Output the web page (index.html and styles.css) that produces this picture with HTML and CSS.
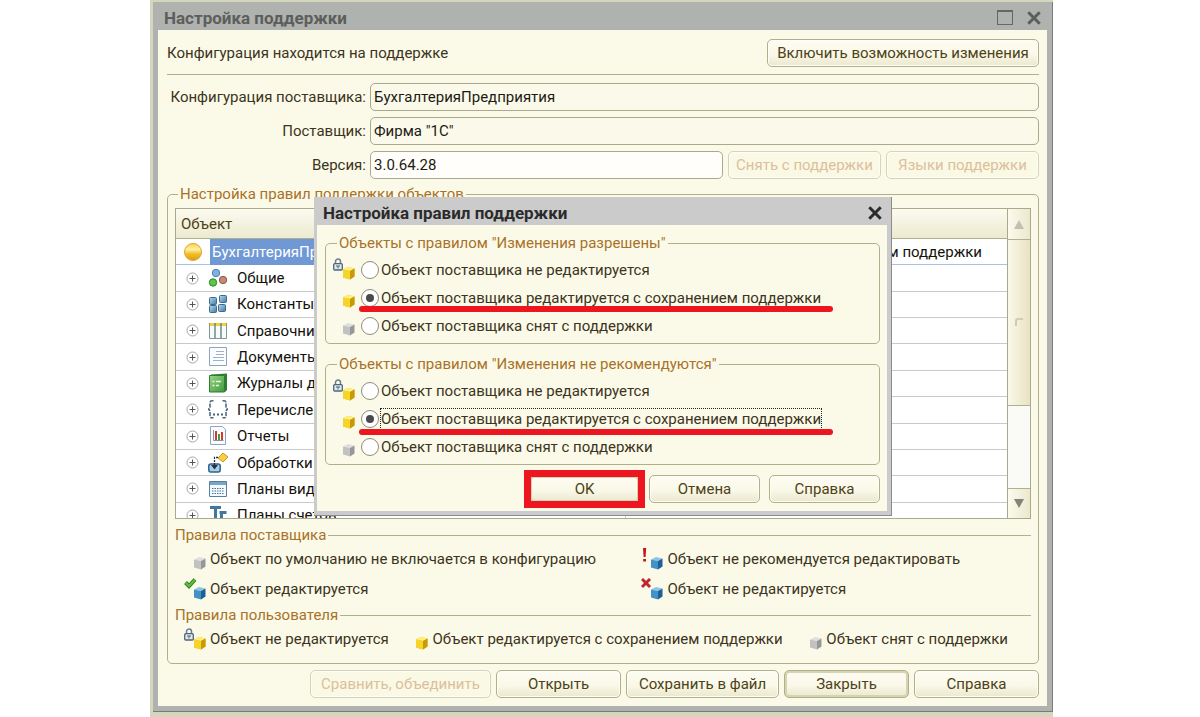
FILE: index.html
```html
<!DOCTYPE html>
<html lang="ru">
<head>
    <meta charset="UTF-8">
    <title>Настройка поддержки</title>
    <link rel="stylesheet" href="styles.css">
</head>
<body>

<svg class="sprite" aria-hidden="true">
    <defs>
        <linearGradient id="ball-fill" x1="0" y1="0" x2="0" y2="1">
            <stop offset="0" stop-color="#ffd23c"/>
            <stop offset=".35" stop-color="#fff0a8"/>
            <stop offset=".6" stop-color="#f5c02a"/>
            <stop offset="1" stop-color="#d99a12"/>
        </linearGradient>
        <linearGradient id="blue-fill" x1="0" y1="0" x2="1" y2="1">
            <stop offset="0" stop-color="#b9d8ec"/>
            <stop offset="1" stop-color="#3f7ba6"/>
        </linearGradient>
        <linearGradient id="green-fill" x1="0" y1="0" x2="1" y2="1">
            <stop offset="0" stop-color="#9ad58a"/>
            <stop offset="1" stop-color="#3f9a3a"/>
        </linearGradient>
    </defs>

    <!-- cubes sit in the lower right corner of a 22x22 box -->
    <symbol id="cube-yellow" viewBox="0 0 22 22">
        <path d="M10 11.500l5-2.500 6.500 1.500v8l-4.500 3-7-2z" fill="#e3b80e"/>
        <path d="M10 11.500l5-2.500 6.500 1.500-4.500 2.500z" fill="#fff07a"/>
        <path d="M10 11.500l7 1.500v8.500l-7-2z" fill="#f6d42a"/>
        <path d="M17 13l4.500-2.500v8l-4.500 3z" fill="#c99a08"/>
    </symbol>
    <symbol id="cube-gray" viewBox="0 0 22 22">
        <path d="M10 11.500l5-2.500 6.500 1.500-4.500 2.500z" fill="#dedede"/>
        <path d="M10 11.500l7 1.500v8.500l-7-2z" fill="#c2c2c2"/>
        <path d="M17 13l4.500-2.500v8l-4.500 3z" fill="#979797"/>
    </symbol>
    <symbol id="cube-blue" viewBox="0 0 22 22">
        <path d="M10 11.500l5-2.500 6.500 1.500-4.500 2.500z" fill="#8cc4e6"/>
        <path d="M10 11.500l7 1.500v8.500l-7-2z" fill="#4292c8"/>
        <path d="M17 13l4.500-2.500v8l-4.500 3z" fill="#1f5f94"/>
    </symbol>
    <symbol id="lock" viewBox="0 0 22 22">
        <path d="M2.500 6V3.500a2.500 2.500 0 0 1 5 0V6" fill="none" stroke="#6b8090" stroke-width="1.500"/>
        <rect x=".7" y="5.700" width="8.600" height="6.300" rx="1" fill="#dfe9ee" stroke="#4f6678" stroke-width="1.300"/>
        <path d="M3 8h4M5 8v2.500" stroke="#4f6678"/>
    </symbol>
    <symbol id="check" viewBox="0 0 22 22">
        <path d="M1.500 4.500l3.500 3.500 6-6.500" fill="none" stroke="#2f7d1d" stroke-width="4"/>
        <path d="M1.500 4.500l3.500 3.500 6-6.500" fill="none" stroke="#5fbf3c" stroke-width="2"/>
    </symbol>
    <symbol id="bang" viewBox="0 0 22 22">
        <path d="M2 0h3.200l-.6 9h-2zM2.200 11h2.800v2.600h-2.800z" fill="#c4161c"/>
    </symbol>
    <symbol id="cross" viewBox="0 0 22 22">
        <path d="M1 1l8 8M9 1l-8 8" stroke="#c0272d" stroke-width="3"/>
    </symbol>

    <symbol id="expand" viewBox="0 0 13 13">
        <circle cx="6.500" cy="6.500" r="5.500" fill="#fff" stroke="#a5a5a5"/>
        <path d="M3.500 6.500h6M6.500 3.500v6" stroke="#555"/>
    </symbol>
    <symbol id="ball" viewBox="0 0 20 20">
        <circle cx="10" cy="10" r="8.500" fill="url(#ball-fill)" stroke="#d9a63a"/>
    </symbol>
    <symbol id="common" viewBox="0 0 20 20">
        <circle cx="8" cy="5" r="3.700" fill="#7fb2e0" stroke="#4b82b4"/>
        <circle cx="5" cy="14.500" r="3.700" fill="#5cc646" stroke="#2f8a28"/>
        <circle cx="15" cy="12" r="3.700" fill="#c48a78" stroke="#8f5748"/>
    </symbol>
    <symbol id="constants" viewBox="0 0 20 20">
        <g fill="url(#blue-fill)" stroke="#3c6c90">
            <rect x="1.500" y="3.500" width="7" height="7" rx="1"/>
            <rect x="11.500" y="1.500" width="7" height="7" rx="1"/>
            <rect x="1.500" y="11.500" width="7" height="7" rx="1"/>
            <rect x="10.500" y="10.500" width="7" height="7" rx="1"/>
        </g>
    </symbol>
    <symbol id="catalogs" viewBox="0 0 20 20">
        <path d="M1.500 2.500h17v15h-17z" fill="#f6fafa" stroke="#7f9898"/>
        <path d="M1 2h18v3h-18z" fill="#8a9a70"/>
        <path d="M2 2h4v3h-4zM8 2h4v3h-4zM14 2h4v3h-4z" fill="#f4cf3c"/>
        <path d="M7 5v12M13 5v12" stroke="#6f8c8c" stroke-width="1.500"/>
    </symbol>
    <symbol id="documents" viewBox="0 0 20 20">
        <path d="M1.500 .5h17v18h-17z" fill="#fafcff" stroke="#8fa4b8"/>
        <path d="M8 4.500h8M8 7.500h8M5 10.500h11M5 13.500h11" stroke="#9bb4cc"/>
    </symbol>
    <symbol id="journals" viewBox="0 0 20 20">
        <path d="M3 1.500l16-1v16.500l-2 2h-14z" fill="#2f7d33"/>
        <path d="M1.500 2.500h15v16.500h-15z" fill="url(#green-fill)" stroke="#2f7d33"/>
        <path d="M4.500 8.500h2M4.500 12.500h2M8 8.500h5M8 12.500h3" stroke="#e6f7df" stroke-width="1.500"/>
    </symbol>
    <symbol id="enums" viewBox="0 0 20 20">
        <path d="M5.500 .8h-1.500q-2 0-2 2v4q0 2-2 2.500q2 .5 2 2.500v4q0 2 2 2h1.500M14.500 .8h1.500q2 0 2 2v4q0 2 2 2.500q-2 .5-2 2.500v4q0 2-2 2h-1.500" fill="none" stroke="#48637a" stroke-width="1.500" stroke-dasharray="4 1"/>
        <path d="M5 14.500h2M9 14.500h2M13 14.500h2" stroke="#48637a" stroke-width="2"/>
    </symbol>
    <symbol id="reports" viewBox="0 0 20 20">
        <path d="M2.500 .5h12l3 3v15h-15z" fill="#fbfcff" stroke="#8fa4b8"/>
        <path d="M5.500 4v10.500h10" fill="none" stroke="#7f93a5"/>
        <path d="M8 5v9" stroke="#d43a2c" stroke-width="2"/>
        <path d="M11 8v6" stroke="#3da03a" stroke-width="2"/>
        <path d="M14 6v8" stroke="#d43a2c" stroke-width="2"/>
    </symbol>
    <symbol id="processing" viewBox="0 0 20 20">
        <path d="M15 0l5 4-5 5-5-4z" fill="#f7cf43" stroke="#c9962a"/>
        <rect x=".8" y="11" width="11.400" height="8" rx="2" fill="#a9d0ea" stroke="#2f618c" stroke-width="1.500"/>
        <path d="M10 4.500h-3.500v9" fill="none" stroke="#26323c" stroke-width="1.300" stroke-dasharray="2 1"/>
        <path d="M3 12h7l-3.500 4.500z" fill="#26323c"/>
    </symbol>
    <symbol id="char-plans" viewBox="0 0 20 20">
        <path d="M1.500 2.500h17v15h-17z" fill="#f4f9fd" stroke="#54809f"/>
        <path d="M2 3h16v3h-16z" fill="#7ba5c2"/>
        <path d="M4 9.500h12M4 12h12M4 14.500h12" stroke="#4b7491" stroke-dasharray="1.500 1"/>
    </symbol>
    <symbol id="accounts" viewBox="0 0 20 20">
        <path d="M2 2.500h11M7.500 2.500v13M11.500 7.500h7M13.500 7.500v11" fill="none" stroke="#3f78a0" stroke-width="3"/>
    </symbol>
    <symbol id="close" viewBox="0 0 14 14">
        <path d="M2 2l10 10M12 2l-10 10" stroke="currentColor" stroke-width="2.600"/>
    </symbol>
</svg>

<div class="desktop">
    <div class="window">
        <div class="titlebar">
            <h1>Настройка поддержки</h1>
            <button class="tool" type="button" aria-label="Развернуть"><span class="maximize"></span></button>
            <button class="tool" type="button" aria-label="Закрыть окно"><svg><use href="#close"/></svg></button>
        </div>

        <div class="content">
            <div class="status">
                <p>Конфигурация находится на поддержке</p>
                <button class="btn xl" type="button">Включить возможность изменения</button>
            </div>

            <div class="fields">
                <label for="config">Конфигурация поставщика:</label>
                <input id="config" type="text" value="БухгалтерияПредприятия" readonly>
                <label for="vendor">Поставщик:</label>
                <input id="vendor" type="text" value="Фирма &quot;1С&quot;" readonly>
                <label for="version">Версия:</label>
                <div class="version">
                    <input id="version" type="text" value="3.0.64.28" readonly>
                    <button class="btn wide" type="button" disabled>Снять с поддержки</button>
                    <button class="btn wide" type="button" disabled>Языки поддержки</button>
                </div>
            </div>

            <fieldset class="group">
                <legend>Настройка правил поддержки объектов</legend>

                <div class="tree">
                    <div class="tree-view">
                        <table>
                            <thead>
                                <tr><th class="name">Объект</th><th></th></tr>
                            </thead>
                            <tbody>
                                <tr class="root">
                                    <td><div class="node"><svg class="pic"><use href="#ball"/></svg><span>БухгалтерияПредприятия</span></div></td>
                                    <td>Объект редактируется с сохранением поддержки</td>
                                </tr>
                                <tr><td><div class="node"><svg class="plus"><use href="#expand"/></svg><svg class="pic"><use href="#common"/></svg>Общие</div></td><td></td></tr>
                                <tr><td><div class="node"><svg class="plus"><use href="#expand"/></svg><svg class="pic"><use href="#constants"/></svg>Константы</div></td><td></td></tr>
                                <tr><td><div class="node"><svg class="plus"><use href="#expand"/></svg><svg class="pic"><use href="#catalogs"/></svg>Справочники</div></td><td></td></tr>
                                <tr><td><div class="node"><svg class="plus"><use href="#expand"/></svg><svg class="pic"><use href="#documents"/></svg>Документы</div></td><td></td></tr>
                                <tr><td><div class="node"><svg class="plus"><use href="#expand"/></svg><svg class="pic"><use href="#journals"/></svg>Журналы документов</div></td><td></td></tr>
                                <tr><td><div class="node"><svg class="plus"><use href="#expand"/></svg><svg class="pic"><use href="#enums"/></svg>Перечисления</div></td><td></td></tr>
                                <tr><td><div class="node"><svg class="plus"><use href="#expand"/></svg><svg class="pic"><use href="#reports"/></svg>Отчеты</div></td><td></td></tr>
                                <tr><td><div class="node"><svg class="plus"><use href="#expand"/></svg><svg class="pic"><use href="#processing"/></svg>Обработки</div></td><td></td></tr>
                                <tr><td><div class="node"><svg class="plus"><use href="#expand"/></svg><svg class="pic"><use href="#char-plans"/></svg>Планы видов характеристик</div></td><td></td></tr>
                                <tr><td><div class="node"><svg class="plus"><use href="#expand"/></svg><svg class="pic"><use href="#accounts"/></svg>Планы счетов</div></td><td></td></tr>
                            </tbody>
                        </table>
                    </div>
                    <div class="scrollbar">
                        <button class="up" type="button" aria-label="Вверх"></button>
                        <div class="thumb"></div>
                        <div class="track"></div>
                        <button class="down" type="button" aria-label="Вниз"></button>
                    </div>
                </div>

                <fieldset class="rules">
                    <legend>Правила поставщика</legend>
                    <ul class="vendor-rules">
                        <li><svg class="mark"><use href="#cube-gray"/></svg>Объект по умолчанию не включается в конфигурацию</li>
                        <li><svg class="mark"><use href="#cube-blue"/><use href="#bang"/></svg>Объект не рекомендуется редактировать</li>
                        <li><svg class="mark"><use href="#cube-blue"/><use href="#check"/></svg>Объект редактируется</li>
                        <li><svg class="mark"><use href="#cube-blue"/><use href="#cross"/></svg>Объект не редактируется</li>
                    </ul>
                </fieldset>

                <fieldset class="rules">
                    <legend>Правила пользователя</legend>
                    <ul class="user-rules">
                        <li><svg class="mark"><use href="#cube-yellow"/><use href="#lock"/></svg>Объект не редактируется</li>
                        <li><svg class="mark"><use href="#cube-yellow"/></svg>Объект редактируется с сохранением поддержки</li>
                        <li><svg class="mark"><use href="#cube-gray"/></svg>Объект снят с поддержки</li>
                    </ul>
                </fieldset>
            </fieldset>

            <div class="actions">
                <button class="btn compare" type="button" disabled>Сравнить, объединить</button>
                <button class="btn" type="button">Открыть</button>
                <button class="btn wide" type="button">Сохранить в файл</button>
                <button class="btn default" type="button">Закрыть</button>
                <button class="btn" type="button">Справка</button>
            </div>
        </div>

        <div class="dialog" role="dialog" aria-labelledby="dialog-title">
            <div class="dialog-title">
                <h2 id="dialog-title">Настройка правил поддержки</h2>
                <button class="tool" type="button" aria-label="Закрыть диалог"><svg><use href="#close"/></svg></button>
            </div>
            <form class="dialog-body">
                <fieldset class="group choice">
                    <legend>Объекты с правилом "Изменения разрешены"</legend>
                    <div class="option">
                        <svg class="mark"><use href="#cube-yellow"/><use href="#lock"/></svg>
                        <input id="a1" type="radio" name="allowed"><label for="a1">Объект поставщика не редактируется</label>
                    </div>
                    <div class="option underlined">
                        <svg class="mark"><use href="#cube-yellow"/></svg>
                        <input id="a2" type="radio" name="allowed" checked><label for="a2">Объект поставщика редактируется с сохранением поддержки</label>
                    </div>
                    <div class="option">
                        <svg class="mark"><use href="#cube-gray"/></svg>
                        <input id="a3" type="radio" name="allowed"><label for="a3">Объект поставщика снят с поддержки</label>
                    </div>
                </fieldset>

                <fieldset class="group choice">
                    <legend>Объекты с правилом "Изменения не рекомендуются"</legend>
                    <div class="option">
                        <svg class="mark"><use href="#cube-yellow"/><use href="#lock"/></svg>
                        <input id="b1" type="radio" name="discouraged"><label for="b1">Объект поставщика не редактируется</label>
                    </div>
                    <div class="option underlined focused">
                        <svg class="mark"><use href="#cube-yellow"/></svg>
                        <input id="b2" type="radio" name="discouraged" checked><label for="b2">Объект поставщика редактируется с сохранением поддержки</label>
                    </div>
                    <div class="option">
                        <svg class="mark"><use href="#cube-gray"/></svg>
                        <input id="b3" type="radio" name="discouraged"><label for="b3">Объект поставщика снят с поддержки</label>
                    </div>
                </fieldset>

                <div class="dialog-actions">
                    <button class="btn default boxed" type="button">OK</button>
                    <button class="btn" type="button">Отмена</button>
                    <button class="btn" type="button">Справка</button>
                </div>
            </form>
        </div>
    </div>
</div>

</body>
</html>
```
FILE: styles.css
```css
* {
    box-sizing: border-box;
}
body {
    margin: 0;
    background: #fff;
    font-family: Roboto, "Liberation Sans", sans-serif;
    font-size: 15px;
    line-height: 20px;
    color: #3b3420;
}
h1, h2, p, ul {
    margin: 0;
    padding: 0;
}
ul {
    list-style: none;
}
button, input {
    font: inherit;
    color: inherit;
}
svg {
    flex: none;
    overflow: visible;
}
.sprite {
    position: absolute;
    width: 0;
    height: 0;
}
.desktop {
    margin: 0 147px 0 150px;
    padding: 2px 0 6px 3px;
    background: #d6d5bd;
}

/* main window */
.window {
    position: relative;
    padding: 0 5px 5px;
    background: #b0b2af;
    border-right: 1px solid #7a7b79;
    border-bottom: 1px solid #7a7b79;
}
.titlebar, .dialog-title {
    display: flex;
    align-items: center;
    gap: 13px;
    height: 28px;
    padding: 3px 5px 0 6px;
    color: #5c5e5c;
}
h1, h2 {
    flex: 1;
    font-size: 17px;
    line-height: 20px;
    font-weight: bold;
}
.tool {
    display: flex;
    padding: 0;
    border: 0;
    background: none;
}
.tool svg {
    width: 16px;
    height: 16px;
}
.maximize {
    width: 16px;
    height: 15px;
    border: 1px solid #656765;
    border-top-width: 2px;
}
.content {
    padding: 9px 8px 8px 9px;
    background: #fbfae9;
}

/* buttons */
.btn {
    min-width: 125px;
    height: 28px;
    padding: 0 6px;
    border: 1px solid #b1b08c;
    border-radius: 5px;
    background: linear-gradient(#fdfcf3, #faf8e8 55%, #eae8cd);
    box-shadow: inset 0 0 0 1px #fffef6;
    color: #4c4216;
    white-space: nowrap;
}
.btn.wide {
    min-width: 153px;
}
.btn.compare {
    min-width: 181px;
}
.btn.xl {
    min-width: 272px;
}
.btn:disabled {
    border-color: #d5d4bb;
    background: #faf9e6;
    color: #dcc09a;
}
.btn.default {
    box-shadow: inset 0 0 0 2px #d5d3b0;
}
.status {
    display: flex;
    align-items: center;
    justify-content: space-between;
    padding-bottom: 7px;
    border-bottom: 1px solid #b1b08c;
}

/* configuration fields */
.fields {
    display: grid;
    grid-template-columns: 199px 1fr;
    gap: 6px 4px;
    align-items: center;
    margin: 8px 0 5px;
}
.fields label {
    text-align: right;
    white-space: nowrap;
}
.fields input {
    width: 100%;
    min-width: 0;
    height: 28px;
    padding: 0 3px;
    border: 1px solid #a9a98c;
    border-radius: 5px;
    background: #fbfaea;
    color: #1d1a12;
}
.version {
    display: flex;
    gap: 5px;
}
.version input {
    flex: 1;
    background: #fffefa;
}

/* framed groups */
fieldset {
    min-width: 0;
    margin: 0;
}
legend {
    padding: 0 2px;
    color: #a87228;
}
.group {
    padding: 4px 7px 14px;
    border: 1px solid #b1b08c;
    border-radius: 5px;
}
.group > legend {
    margin-left: 3px;
}
.rules {
    margin-top: 6px;
    padding: 4px 0 0 9px;
    border: 0;
    border-top: 1px solid #b1b08c;
}
.rules > legend {
    margin-left: -9px;
    padding-left: 0;
}
.rules li {
    display: flex;
    align-items: center;
    gap: 4px;
    white-space: nowrap;
}
.vendor-rules {
    display: grid;
    grid-template-columns: 54% 1fr;
    row-gap: 10px;
}
.user-rules {
    display: flex;
    justify-content: space-between;
    padding-right: 23px;
}
.mark {
    width: 22px;
    height: 22px;
    margin: -2px 0 0;
}
.rules .mark {
    margin-bottom: -1px;
}

/* tree of objects */
.tree {
    display: flex;
    height: 311px;
    border: 1px solid #a9a98c;
}
.tree-view {
    flex: 1;
    overflow: hidden;
    background: #fff;
}
table {
    width: 100%;
    height: 320px;
    border-collapse: separate;
    border-spacing: 0;
    table-layout: fixed;
    color: #14120c;
}
th {
    height: 30px;
    padding: 0 5px;
    border-bottom: 1px solid #b1b08c;
    background: linear-gradient(#fcfbf0, #ecead0);
    color: #4c4216;
    font-weight: normal;
    text-align: left;
}
.name {
    width: 54%;
}
td {
    padding: 0;
    border-bottom: 1px solid #c9c9c9;
    white-space: nowrap;
}
td + td {
    padding-left: 6px;
    border-left: 1px solid #c9c9c9;
}
.node {
    display: flex;
    align-items: center;
    gap: 9px;
    height: 25px;
    padding-left: 10px;
}
.plus {
    width: 13px;
    height: 13px;
}
.pic {
    width: 20px;
    height: 20px;
}
.root td {
    border-bottom-color: #a8c3e4;
}
.root .node {
    gap: 7px;
    padding-left: 7px;
}
.root span {
    flex: 1;
    padding: 3px 2px;
    background: #6f98d4;
    color: #fff;
}
.scrollbar {
    display: flex;
    flex-direction: column;
    width: 23px;
    border-left: 1px solid #a9a98c;
    background: #fafaf6;
}
.scrollbar button {
    display: flex;
    align-items: center;
    justify-content: center;
    height: 30px;
    padding: 0;
    border: 0;
    background: linear-gradient(90deg, #fbfaec, #ebe8cf);
}
.scrollbar button::before {
    content: "";
    border: 5px solid transparent;
}
.scrollbar .up::before {
    border-top: 0;
    border-bottom: 9px solid #c2c0b2;
}
.scrollbar .down {
    border-top: 1px solid #b1b08c;
}
.scrollbar .down::before {
    border-bottom: 0;
    border-top: 9px solid #84837a;
}
.thumb {
    display: flex;
    align-items: center;
    justify-content: center;
    flex: 2;
    border: 1px solid #b1b08c;
    border-width: 1px 0;
    background: linear-gradient(90deg, #faf8e8, #e8e2c4);
}
.thumb::before {
    content: "";
    width: 6px;
    height: 6px;
    border: 2px solid #cfccb6;
    border-width: 2px 0 0 2px;
    border-radius: 3px 0 0;
}
.track {
    flex: 1;
}
.actions {
    display: flex;
    justify-content: flex-end;
    gap: 5px;
    margin-top: 6px;
}

/* dialog over the window */
.dialog {
    position: absolute;
    top: 195px;
    left: 161px;
    right: 160px;
    padding: 0 4px 4px 3px;
    background: #cbcbcb;
    border-right: 1px solid #8c8c8c;
    border-bottom: 1px solid #8c8c8c;
}
.dialog-title {
    padding-right: 4px;
    color: #2b2b2b;
}
.dialog-body {
    padding: 8px 7px 8px 8px;
    background: #fbfae9;
}
.choice {
    padding: 3px 7px;
    margin-bottom: 10px;
}
.choice > legend {
    margin-left: 4px;
}
.option {
    position: relative;
    display: flex;
    align-items: center;
    width: fit-content;
    height: 28px;
}
.option input {
    display: grid;
    place-items: center;
    width: 18px;
    height: 18px;
    margin: 0 2px 0 6px;
    appearance: none;
    border: 1px solid #8e8d78;
    border-radius: 50%;
    background: #fff;
}
.option input:checked::before {
    content: "";
    width: 8px;
    height: 8px;
    border-radius: 50%;
    background: #4a4a4a;
}
.underlined::after {
    content: "";
    position: absolute;
    left: 26px;
    right: -12px;
    bottom: 0;
    height: 6px;
    border-radius: 3px;
    background: #ed1620;
}
.focused::after {
    bottom: -2px;
}
.focused label {
    outline: 1px dotted #222;
}
.dialog-actions {
    display: flex;
    justify-content: flex-end;
    gap: 9px;
}
.dialog-actions .btn {
    min-width: 111px;
}
.boxed {
    position: relative;
}
.boxed::after {
    content: "";
    position: absolute;
    inset: -6px;
    border: 7px solid #ed1620;
}
```
